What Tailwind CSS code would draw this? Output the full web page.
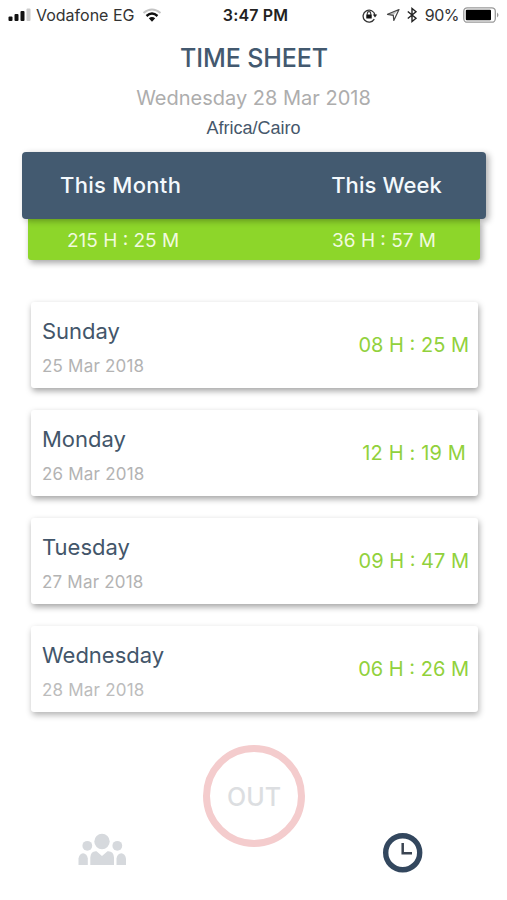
<!DOCTYPE html>
<html lang="en">
<head>
    <meta charset="UTF-8">
    <meta name="viewport" content="width=device-width, initial-scale=1.0">
    <title>Time Sheet</title>
    <script src="https://cdn.jsdelivr.net/npm/@tailwindcss/browser@4"></script>
</head>
<body class="bg-white font-['Inter',sans-serif]">
    <div class="w-[507px] h-[900px] flex flex-col overflow-hidden">

        <!-- Status bar -->
        <header class="h-[30px] shrink-0 grid grid-cols-[1fr_auto_1fr] items-center pl-2 pr-[7px] text-[#222] text-base leading-none">
            <div class="flex items-center">
                <svg class="w-[24px] h-[14px]" viewBox="0 0 24 14">
                    <rect x="0.5" y="8.500" width="4" height="4.500" rx="1" fill="#111"/>
                    <rect x="6.5" y="6" width="4" height="7" rx="1" fill="#111"/>
                    <rect x="12.5" y="3" width="4" height="10" rx="1" fill="#111"/>
                    <rect x="18.500" y="0.500" width="4" height="12.500" rx="1" fill="#ccc"/>
                </svg>
                <span class="ml-1 text-[#333]">Vodafone EG</span>
                <svg class="w-[20px] h-[15px] ml-2" viewBox="0 0 20 15" fill="none">
                    <path d="M1.500 5Q10-2 18.500 5" stroke="#c4c4c4" stroke-width="2"/>
                    <path d="M4.500 8Q10 3.200 15.500 8" stroke="#111" stroke-width="2.400"/>
                    <path d="M6.800 10.300Q10 7.700 13.200 10.300L10 13.700Z" fill="#111"/>
                </svg>
            </div>
            <div class="pl-[3px] font-semibold tracking-[0.15px]">3:47 PM</div>
            <div class="flex items-center justify-end">
                <svg class="w-[16px] h-[15px]" viewBox="0 0 16 15" fill="none" stroke="#333">
                    <path d="M12.300 11.200A6 6 0 1 1 13 7" stroke-width="1.300"/>
                    <path d="M10.800 6.500H15.200L13 9.500Z" fill="#222" stroke="none"/>
                    <rect x="4.300" y="6.500" width="5.400" height="4" fill="#111" stroke="none"/>
                    <path d="M5.300 7V5.300a1.700 1.700 0 0 1 3.400 0V7" stroke-width="1.100"/>
                </svg>
                <svg class="w-[14px] h-[14px] ml-2" viewBox="0 0 14 14" fill="none" stroke="#444" stroke-width="1.200" stroke-linejoin="round">
                    <path d="M13 1.500L1.500 6.300L7.300 7.300L7.800 12.500Z"/>
                    <path d="M13 1.500L1.500 6.300L7.300 7.300Z" fill="#555" stroke="none" opacity=".35"/>
                </svg>
                <svg class="w-[12px] h-[16px] ml-1.5" viewBox="0 0 12 16" fill="none" stroke="#222" stroke-width="1.400">
                    <path d="M1.800 4.500L10 11.300L6 14.500V1.500L10 4.700L1.800 11.500"/>
                </svg>
                <span class="ml-[7px] tracking-[-0.5px] text-[#333]">90%</span>
                <svg class="w-[37px] h-[16px] ml-[4px]" viewBox="0 0 37 16">
                    <rect x="0.800" y="0.800" width="31.500" height="14.400" rx="3.500" fill="#fff" stroke="#999" stroke-width="1.300"/>
                    <rect x="2.800" y="2.800" width="25.200" height="10.400" rx="1" fill="#000"/>
                    <path d="M34 5.500Q37 8 34 10.500Z" fill="#999"/>
                </svg>
            </div>
        </header>

        <!-- Title -->
        <div class="h-[122px] shrink-0 flex flex-col items-center pt-3">
            <h1 class="text-[25px] leading-8 font-medium text-[#43596f] tracking-[-0.1px] pl-px">TIME SHEET</h1>
            <p class="mt-2.5 text-[20px] leading-7 text-[#adadad]">Wednesday 28 Mar 2018</p>
            <p class="mt-1 text-[18px] leading-6 text-[#46576b] font-['Liberation_Sans',sans-serif]">Africa/Cairo</p>
        </div>

        <!-- Totals -->
        <section class="shrink-0 px-[22px]">
            <div class="relative h-[67px] w-[464px] rounded-[4px] bg-[#435a70] shadow-[3px_2px_6px_rgba(0,0,0,0.3)] flex items-center justify-between pl-[38px] pr-[44px] text-[22px] font-medium text-[#f4f9fd]">
                <span class="tracking-[0.3px]">This Month</span>
                <span class="tracking-[0.1px]">This Week</span>
            </div>
            <div class="ml-[6px] h-[41px] w-[452px] rounded-b-[3px] bg-[#8dd62a] shadow-[2px_3px_6px_rgba(0,0,0,0.35)] flex items-center justify-between pt-[3px] pl-[39px] pr-[44px] text-[19px] text-[#f1fadf]">
                <span>215 H : 25 M</span>
                <span>36 H : 57 M</span>
            </div>
        </section>

        <!-- Daily entries -->
        <section class="shrink-0 mt-[42px] ml-[31px] w-[447px] flex flex-col gap-[22px]">
            <div class="h-[86px] rounded-[3px] bg-white shadow-[1px_3px_6px_rgba(0,0,0,0.36)] flex items-center justify-between pl-[11px] pr-[9px]">
                <div class="pt-[7px]">
                    <div class="text-[22px] leading-8 text-[#43566a]">Sunday</div>
                    <div class="mt-[3px] text-[17px] leading-8 tracking-[0.2px] text-[#b3b3b3]">25 Mar 2018</div>
                </div>
                <div class="text-[20px] text-[#91d13c]">08 H : 25 M</div>
            </div>
            <div class="h-[86px] rounded-[3px] bg-white shadow-[1px_3px_6px_rgba(0,0,0,0.36)] flex items-center justify-between pl-[11px] pr-[12px]">
                <div class="pt-[7px]">
                    <div class="text-[22px] leading-8 text-[#43566a]">Monday</div>
                    <div class="mt-[3px] text-[17px] leading-8 tracking-[0.2px] text-[#b3b3b3]">26 Mar 2018</div>
                </div>
                <div class="text-[20px] tracking-[0.15px] text-[#91d13c]">12 H : 19 M</div>
            </div>
            <div class="h-[86px] rounded-[3px] bg-white shadow-[1px_3px_6px_rgba(0,0,0,0.36)] flex items-center justify-between pl-[11px] pr-[9px]">
                <div class="pt-[7px]">
                    <div class="text-[22px] leading-8 text-[#43566a]">Tuesday</div>
                    <div class="mt-[3px] text-[17px] leading-8 tracking-[0.2px] text-[#b3b3b3]">27 Mar 2018</div>
                </div>
                <div class="text-[20px] text-[#91d13c]">09 H : 47 M</div>
            </div>
            <div class="h-[86px] rounded-[3px] bg-white shadow-[1px_3px_6px_rgba(0,0,0,0.30)] flex items-center justify-between pl-[11px] pr-[9px]">
                <div class="pt-[7px]">
                    <div class="text-[22px] leading-8 text-[#43566a]">Wednesday</div>
                    <div class="mt-[3px] text-[17px] leading-8 tracking-[0.2px] text-[#bcbcbc]">28 Mar 2018</div>
                </div>
                <div class="text-[20px] text-[#91d13c]">06 H : 26 M</div>
            </div>
        </section>

        <!-- Bottom tabs with the check-out button -->
        <nav class="flex-1 mt-[33px] flex items-start">
            <div class="w-[203px] pt-[86px] pl-[78px]">
                <svg class="w-[50px] h-[36px]" viewBox="0 0 50 36" fill="#d6d9dd">
                    <circle cx="24" cy="10.500" r="7.700"/>
                    <circle cx="9.300" cy="14.800" r="4.900"/>
                    <circle cx="39.300" cy="14.800" r="4.900"/>
                    <path d="M12.300 34V26.500Q12.800 19.800 18.500 20.300L24 25L29.500 20.300Q35.500 19.800 36 26.500V34Z"/>
                    <path d="M0.500 34V27.500Q1.500 22.800 5 22.300Q9 22.800 9.800 27.500V34Z"/>
                    <path d="M38.500 34V27.500Q39.300 22.800 43.300 22.300Q47 22.800 48 27.500V34Z"/>
                </svg>
            </div>
            <button class="size-[102px] pt-[3px] rounded-full border-[7px] border-[#f4cccd] bg-white text-[25px] font-medium text-[#dcdee1]">OUT</button>
            <div class="pt-[87px] pl-[77px]">
                <svg class="w-[42px] h-[42px]" viewBox="0 0 42 42" fill="none">
                    <circle cx="20.700" cy="20.700" r="17" stroke="#33475e" stroke-width="5.400"/>
                    <path d="M20.700 11V21.300H30" stroke="#3b4552" stroke-width="2.500"/>
                </svg>
            </div>
        </nav>
    </div>
</body>
</html>
